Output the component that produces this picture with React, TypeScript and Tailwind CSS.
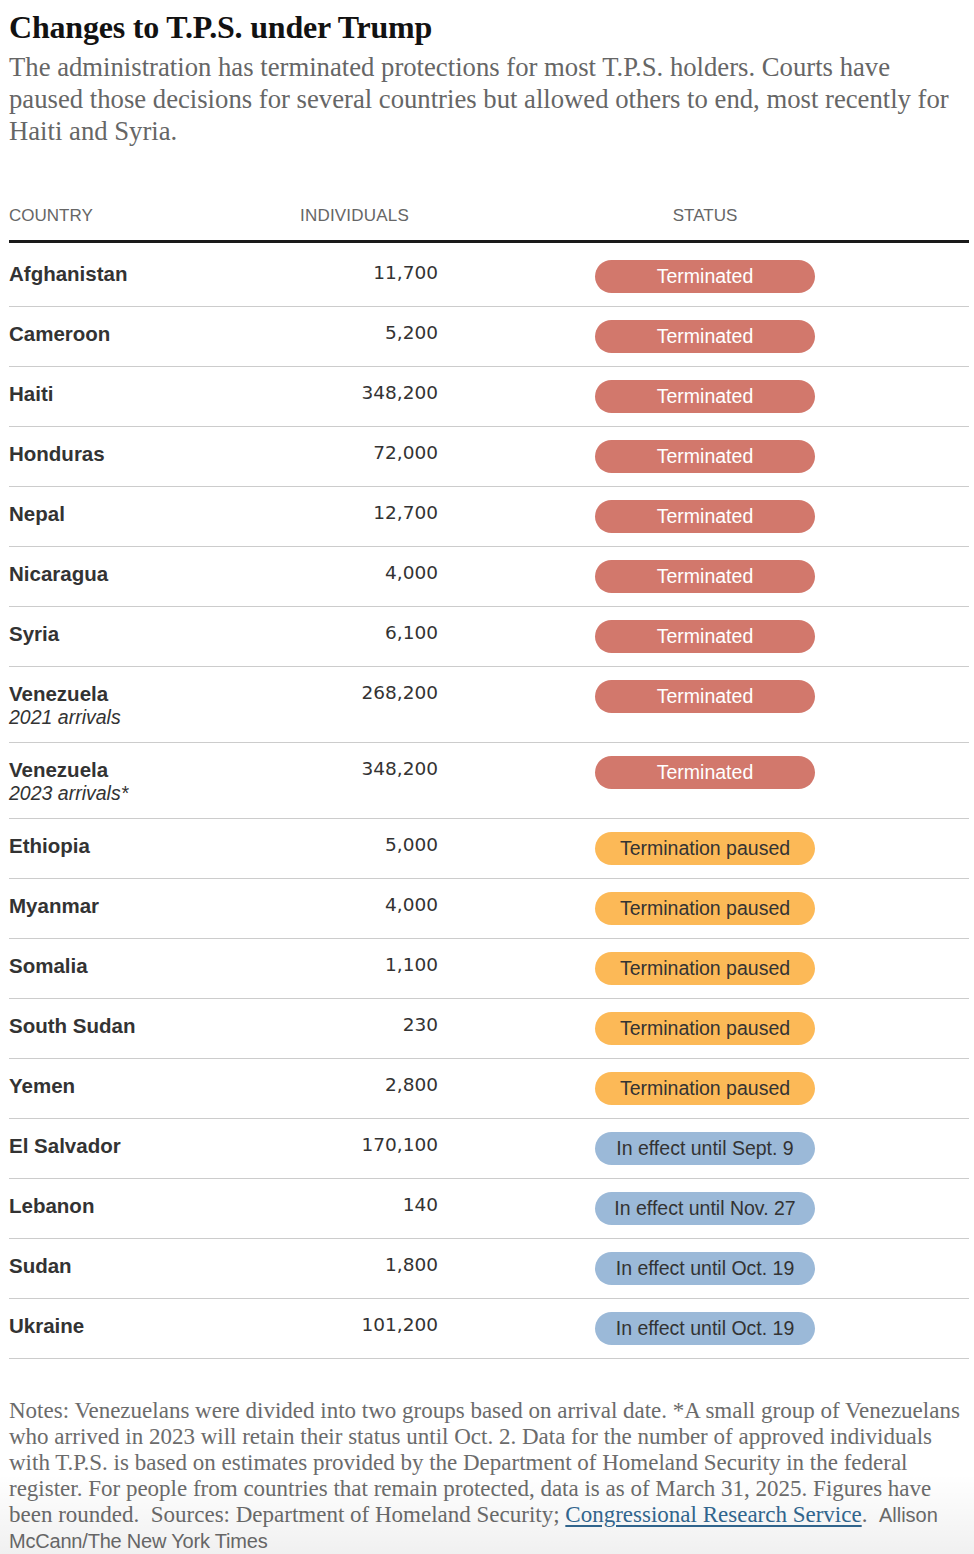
import React from "react";

type Status = "t" | "p" | "e";
type Row = { country: string; sub?: string; n: string; status: Status; label: string };

const rows: Row[] = [
  { country: "Afghanistan", n: "11,700", status: "t", label: "Terminated" },
  { country: "Cameroon", n: "5,200", status: "t", label: "Terminated" },
  { country: "Haiti", n: "348,200", status: "t", label: "Terminated" },
  { country: "Honduras", n: "72,000", status: "t", label: "Terminated" },
  { country: "Nepal", n: "12,700", status: "t", label: "Terminated" },
  { country: "Nicaragua", n: "4,000", status: "t", label: "Terminated" },
  { country: "Syria", n: "6,100", status: "t", label: "Terminated" },
  { country: "Venezuela", sub: "2021 arrivals", n: "268,200", status: "t", label: "Terminated" },
  { country: "Venezuela", sub: "2023 arrivals*", n: "348,200", status: "t", label: "Terminated" },
  { country: "Ethiopia", n: "5,000", status: "p", label: "Termination paused" },
  { country: "Myanmar", n: "4,000", status: "p", label: "Termination paused" },
  { country: "Somalia", n: "1,100", status: "p", label: "Termination paused" },
  { country: "South Sudan", n: "230", status: "p", label: "Termination paused" },
  { country: "Yemen", n: "2,800", status: "p", label: "Termination paused" },
  { country: "El Salvador", n: "170,100", status: "e", label: "In effect until Sept. 9" },
  { country: "Lebanon", n: "140", status: "e", label: "In effect until Nov. 27" },
  { country: "Sudan", n: "1,800", status: "e", label: "In effect until Oct. 19" },
  { country: "Ukraine", n: "101,200", status: "e", label: "In effect until Oct. 19" },
];

const pillClass: Record<Status, string> = {
  t: "bg-[#d2786c] text-white",
  p: "bg-[#fcb957] text-[#333333]",
  e: "bg-[#9bb9d8] text-[#333333]",
};

const serif = { fontFamily: '"Liberation Serif", "Times New Roman", serif' };
const sans = { fontFamily: '"Liberation Sans", Arial, sans-serif' };

export default function App() {
  return (
    <div className="relative w-[974px] min-h-[1554px] bg-white overflow-hidden">
      <div className="pl-[9px] pr-[5px]">
        <h1
          className="pt-[7px] text-[32px] leading-[40px] font-bold text-[#121212] tracking-[-0.2px]"
          style={serif}
        >
          Changes to T.P.S. under Trump
        </h1>
        <p className="mt-[4px] text-[26.7px] leading-[32px] text-[#666666]" style={serif}>
          <span className="block whitespace-nowrap">
            The administration has terminated protections for most T.P.S. holders. Courts have
          </span>
          <span className="block whitespace-nowrap">
            paused those decisions for several countries but allowed others to end, most recently for
          </span>
          <span className="block whitespace-nowrap">Haiti and Syria.</span>
        </p>

        <div className="mt-[59px] w-[960px]" style={sans}>
          <div className="grid grid-cols-[291px_139px_1fr] pb-[14px] border-b-[3px] border-[#1a1a1a] text-[17px] leading-[20px] text-[#666666] uppercase">
            <div>Country</div>
            <div className="tracking-[0.2px]">Individuals</div>
            <div className="text-center pl-[2px]">Status</div>
          </div>
          {rows.map((r, i) => (
            <div
              key={i}
              className={`grid grid-cols-[291px_139px_1fr] pb-[13px] border-b border-[#cccccc] ${
                i === 0 ? "pt-[17px]" : "pt-[13px]"
              }`}
            >
              <div className="pt-[2px] text-[#333333]">
                <div className="text-[20.5px] leading-[24px] font-bold">{r.country}</div>
                {r.sub && <div className="text-[19.5px] leading-[23px] italic">{r.sub}</div>}
              </div>
              <div
                className="pt-[1px] pr-[1px] text-right text-[18.5px] leading-[24px] text-[#333333]"
                style={{ fontFamily: '"DejaVu Sans", Verdana, sans-serif' }}
              >
                {r.n}
              </div>
              <div className="flex justify-center pl-[2px]">
                <div
                  className={`w-[220px] h-[33px] rounded-full text-center text-[19.5px] leading-[33px] ${pillClass[r.status]}`}
                >
                  {r.label}
                </div>
              </div>
            </div>
          ))}
        </div>

        <div className="mt-[39px] text-[23px] leading-[26px] text-[#6b6b6b]" style={serif}>
          <span className="block whitespace-nowrap">
            Notes: Venezuelans were divided into two groups based on arrival date. *A small group of Venezuelans
          </span>
          <span className="block whitespace-nowrap">
            who arrived in 2023 will retain their status until Oct. 2. Data for the number of approved individuals
          </span>
          <span className="block whitespace-nowrap">
            with T.P.S. is based on estimates provided by the Department of Homeland Security in the federal
          </span>
          <span className="block whitespace-nowrap">
            register. For people from countries that remain protected, data is as of March 31, 2025. Figures have
          </span>
          <span className="block whitespace-nowrap">
            been rounded.{"\u00a0"} Sources: Department of Homeland Security;{" "}
            <span className="text-[#326891] underline underline-offset-[3px]">Congressional Research Service</span>.
            {"\u00a0\u00a0"}
            <span className="text-[20px]" style={sans}>
              Allison
            </span>
          </span>
          <span className="block whitespace-nowrap text-[20px] tracking-[-0.2px]" style={sans}>
            McCann/The New York Times
          </span>
        </div>
      </div>
      <div className="pointer-events-none absolute left-0 right-0 bottom-0 h-[80px] bg-gradient-to-b from-[rgba(0,0,0,0)] to-[rgba(0,0,0,0.06)]" />
    </div>
  );
}
